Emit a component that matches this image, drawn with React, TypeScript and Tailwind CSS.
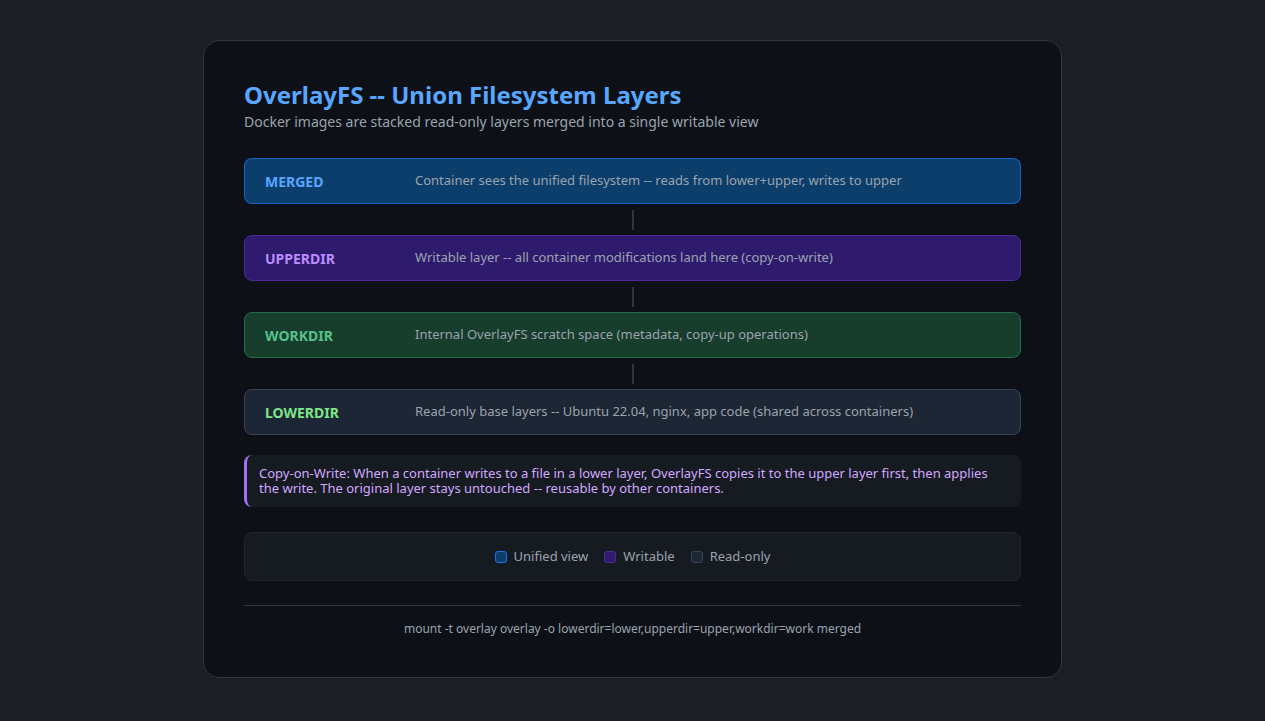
const layers = [
  { name: "MERGED", desc: "Container sees the unified filesystem -- reads from lower+upper, writes to upper", box: "bg-[#0c3e6b] border-[#1f6feb]/70", label: "text-[#58a6ff]" },
  { name: "UPPERDIR", desc: "Writable layer -- all container modifications land here (copy-on-write)", box: "bg-[#2f1b6e] border-[#4c2a9a]", label: "text-[#bc8cff]" },
  { name: "WORKDIR", desc: "Internal OverlayFS scratch space (metadata, copy-up operations)", box: "bg-[#173d2c] border-[#2a6a48]", label: "text-[#56c28a]" },
  { name: "LOWERDIR", desc: "Read-only base layers -- Ubuntu 22.04, nginx, app code (shared across containers)", box: "bg-[#1c2634] border-[#394452]", label: "text-[#7ee787]" },
];

export default function App() {
  return (
    <div className="min-h-[721px] w-full bg-[#1b1e23] pt-[40px] font-['Liberation_Sans',Arial,sans-serif]">
      <div className="mx-auto w-[859px] rounded-2xl border border-[#30363d] bg-[#0d1117] px-[40px] pt-[38px] pb-[40px]">
        <h1 className="text-[24px] font-bold leading-[32px] text-[#58a6ff]">OverlayFS -- Union Filesystem Layers</h1>
        <p className="mt-[1px] text-[14px] leading-[20px] text-[#9ba3ad]">Docker images are stacked read-only layers merged into a single writable view</p>
        <div className="mt-[26px] flex flex-col">
          {layers.map((l, i) => (
            <div key={l.name}>
              {i > 0 && (
                <div className="flex h-[31px] items-center justify-center">
                  <div className="h-[20px] w-[2px] bg-[#30363d]" />
                </div>
              )}
              <div className={`flex h-[46px] items-center rounded-lg border px-[20px] ${l.box}`}>
                <span className={`w-[150px] text-[14px] font-bold ${l.label}`}>{l.name}</span>
                <span className="text-[13px] text-[#9ba3ad]">{l.desc}</span>
              </div>
            </div>
          ))}
        </div>
        <div className="mt-[20px] rounded-lg border-l-[3px] border-[#a371f7] bg-[#161b22] px-[12px] py-[11px] text-[13px] leading-[15px] text-[#d2a8ff]">
          Copy-on-Write: When a container writes to a file in a lower layer, OverlayFS copies it to the upper layer first, then applies the write. The original layer stays untouched -- reusable by other containers.
        </div>
        <div className="mt-[25px] flex h-[49px] items-center justify-center gap-[16px] rounded-lg border border-[#21262d] bg-[#161b22] text-[13px] text-[#9ba3ad]">
          <span className="flex items-center gap-[7px]"><span className="h-[12px] w-[12px] rounded-[3px] border border-[#1f6feb] bg-[#0c3e6b]" />Unified view</span>
          <span className="flex items-center gap-[7px]"><span className="h-[12px] w-[12px] rounded-[3px] border border-[#4c2a9a] bg-[#2f1b6e]" />Writable</span>
          <span className="flex items-center gap-[7px]"><span className="h-[12px] w-[12px] rounded-[3px] border border-[#394452] bg-[#1c2634]" />Read-only</span>
        </div>
        <div className="mt-[24px] border-t border-[#30363d] pt-[15px] text-center text-[12px] leading-[16px] text-[#9ba3ad]">
          mount -t overlay overlay -o lowerdir=lower,upperdir=upper,workdir=work merged
        </div>
      </div>
    </div>
  );
}
